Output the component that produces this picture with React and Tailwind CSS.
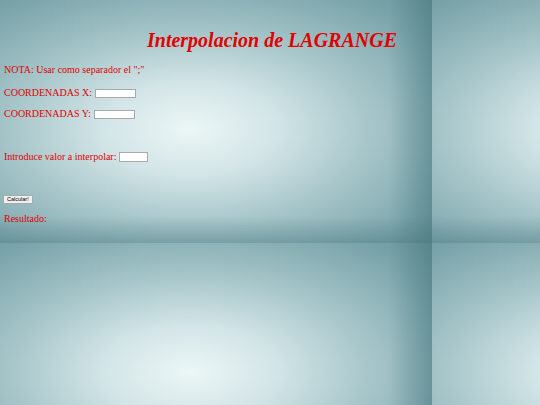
export default function App() {
  return (
    <div className="min-h-screen w-full [background-image:linear-gradient(to_right,transparent_90%,rgba(62,110,118,0.45)_100%),linear-gradient(to_bottom,transparent_89%,rgba(62,110,118,0.35)_100%),radial-gradient(ellipse_at_44%_53%,#ecf6f6_0%,#d3e5e7_25%,#a3c3c7_55%,#7aa4aa_85%,#6b979e_100%)] [background-size:432px_243px] font-['Liberation_Serif',serif] text-[#e00000] pl-[4px]">
      <h1 className="pt-[26px] h-[54px] text-center text-[20px] leading-[28px] font-bold italic">
        Interpolacion de LAGRANGE
      </h1>
      <p className="mt-[9px] h-[14px] text-[10px] leading-[14px]">
        NOTA: Usar como separador el ";"
      </p>
      <p className="mt-[9px] h-[14px] flex items-center text-[10px] leading-[14px]">
        COORDENADAS X:
        <input className="ml-[3px] w-[41px] h-[9px] bg-white border border-[#a9a9a9]" />
      </p>
      <p className="mt-[7px] h-[14px] flex items-center text-[10px] leading-[14px]">
        COORDENADAS Y:
        <input className="ml-[3px] w-[41px] h-[9px] bg-white border border-[#a9a9a9]" />
      </p>
      <p className="mt-[29px] h-[14px] flex items-center text-[10px] leading-[14px]">
        Introduce valor a interpolar:
        <input className="ml-[3px] w-[29px] h-[10px] bg-white border border-[#a9a9a9]" />
      </p>
      <div className="mt-[31px] h-[10px] flex items-start">
        <button className="-ml-[1px] h-[9px] px-[3px] bg-[#efefef] border border-[#a9a9a9] rounded-[1px] font-['Liberation_Sans',sans-serif] text-[5.5px] leading-[7px] text-black">
          Calcular!
        </button>
      </div>
      <p className="mt-[7px] h-[14px] text-[10px] leading-[14px]">Resultado:</p>
    </div>
  );
}
